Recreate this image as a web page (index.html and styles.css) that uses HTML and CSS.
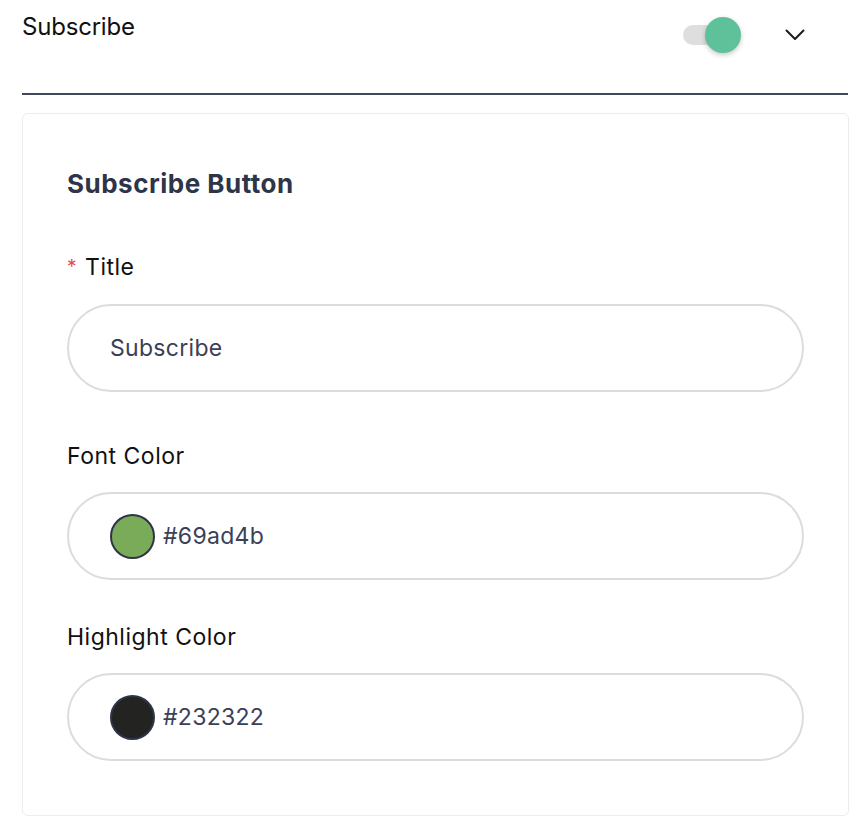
FILE: index.html
```html
<!DOCTYPE html>
<html lang="en">
<head>
<meta charset="utf-8">
<title>Subscribe</title>
<link rel="stylesheet" href="styles.css">
</head>
<body>
<div class="panel">
  <div class="header">
    <div class="header-title">Subscribe</div>
    <div class="header-actions">
      <div class="switch">
        <span class="switch-track"></span>
        <span class="switch-thumb"></span>
      </div>
      <svg class="chevron" width="20" height="12" viewBox="0 0 20 12" fill="none">
        <path d="M1.5 1.5 L10 10 L18.5 1.5" stroke="#1c1c1c" stroke-width="2" stroke-linecap="round" stroke-linejoin="round"/>
      </svg>
    </div>
  </div>
  <div class="divider"></div>
  <div class="card">
    <h2 class="card-title">Subscribe Button</h2>
    <div class="field field-title">
      <label class="label"><span class="req">*</span>Title</label>
      <div class="input"><span class="value">Subscribe</span></div>
    </div>
    <div class="field field-font">
      <label class="label">Font Color</label>
      <div class="input"><span class="swatch swatch-green"></span><span class="value">#69ad4b</span></div>
    </div>
    <div class="field field-highlight">
      <label class="label">Highlight Color</label>
      <div class="input"><span class="swatch swatch-dark"></span><span class="value">#232322</span></div>
    </div>
  </div>
</div>
</body>
</html>
```
FILE: styles.css
```css
* { box-sizing: border-box; }
html, body { margin: 0; padding: 0; background: #ffffff; }
body { font-family: "Inter", "Noto Sans", sans-serif; color: #111; }

.panel { padding: 0 9px 0 22px; width: 858px; }

.header {
  display: flex;
  justify-content: space-between;
  align-items: flex-start;
  height: 93px;
}
.header-title {
  font-size: 24px;
  line-height: 28px;
  margin-top: 13px;
  color: #111;
  letter-spacing: -0.2px;
}
.header-actions {
  display: flex;
  align-items: center;
  margin-top: 17px;
  margin-right: 44px;
}
.switch { position: relative; width: 58px; height: 36px; margin-right: -2px; }
.switch-track {
  position: absolute; left: 0; top: 8px;
  width: 50px; height: 20px; border-radius: 10px;
  background: #dedede;
}
.switch-thumb {
  position: absolute; left: 22px; top: 0;
  width: 36px; height: 36px; border-radius: 50%;
  background: #5fc199;
  box-shadow: 0 2px 5px rgba(0,0,0,0.22);
}
.chevron { margin-left: 46px; display: block; }

.divider { height: 2px; background: #414859; margin-right: 1px; }

.card {
  margin-top: 18px;
  border: 1px solid #ececec;
  border-radius: 6px;
  padding: 54px 44px 0 44px;
  height: 703px;
}
.card-title {
  margin: 0;
  font-size: 26px;
  line-height: 32px;
  font-weight: 700;
  color: #2e3549;
  letter-spacing: 0.5px;
}
.field-title { margin-top: 53px; }
.field-font { margin-top: 50px; }
.field-highlight { margin-top: 43px; }
.label {
  display: block;
  font-size: 23px;
  line-height: 28px;
  color: #111;
  letter-spacing: 0.5px;
}
.req { color: #e5484d; font-size: 19px; margin-right: 8px; vertical-align: 2px; }
.input {
  margin-top: 22px;
  height: 88px;
  border: 2px solid #dcdcdc;
  border-radius: 44px;
  display: flex;
  align-items: center;
  padding-left: 41px;
}
.field-title .input { margin-top: 23px; }
.value { font-size: 23px; color: #3a4056; letter-spacing: 0.3px; }
.swatch {
  width: 45px; height: 45px; border-radius: 50%;
  border: 2px solid #2e3549;
  margin-right: 8px;
}
.swatch-green { background: #7aab58; }
.swatch-dark { background: #232322; }
```
